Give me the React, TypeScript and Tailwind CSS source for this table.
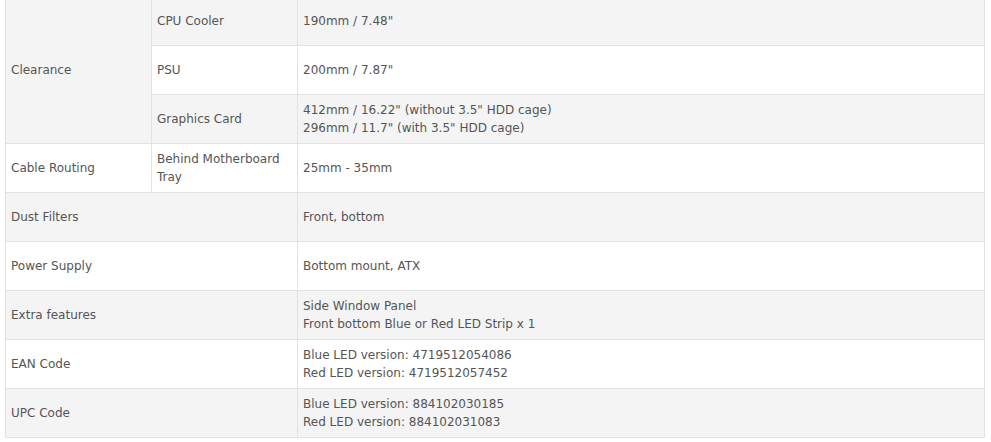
import React from "react";

type Row = {
  head?: string;
  headSpan?: number;
  sub?: string;
  value: string[];
  bg: string;
  full?: boolean;
};

const rows: Row[] = [
  { head: "Clearance", headSpan: 3, sub: "CPU Cooler", value: ["190mm / 7.48\""], bg: "bg-[#f4f4f4]" },
  { sub: "PSU", value: ["200mm / 7.87\""], bg: "bg-white" },
  {
    sub: "Graphics Card",
    value: ["412mm / 16.22\" (without 3.5\" HDD cage)", "296mm / 11.7\" (with 3.5\" HDD cage)"],
    bg: "bg-[#f4f4f4]",
  },
  { head: "Cable Routing", sub: "Behind Motherboard Tray", value: ["25mm - 35mm"], bg: "bg-white" },
  { head: "Dust Filters", full: true, value: ["Front, bottom"], bg: "bg-[#f4f4f4]" },
  { head: "Power Supply", full: true, value: ["Bottom mount, ATX"], bg: "bg-white" },
  {
    head: "Extra features",
    full: true,
    value: ["Side Window Panel", "Front bottom Blue or Red LED Strip x 1"],
    bg: "bg-[#f4f4f4]",
  },
  {
    head: "EAN Code",
    full: true,
    value: ["Blue LED version: 4719512054086", "Red LED version: 4719512057452"],
    bg: "bg-white",
  },
  {
    head: "UPC Code",
    full: true,
    value: ["Blue LED version: 884102030185", "Red LED version: 884102031083"],
    bg: "bg-[#f4f4f4]",
  },
];

const cell = "border border-[#e2e2e2] px-[5px] align-middle";

export default function App() {
  return (
    <div className="w-[991px] h-[442px] overflow-hidden bg-white">
      <div className="-mt-[4px] pl-[5px]">
        <table
          className="w-[980px] table-fixed border-collapse text-[12px] leading-[18px] text-[#555]"
          style={{ fontFamily: '"DejaVu Sans", Verdana, sans-serif' }}
        >
          <colgroup>
            <col className="w-[146px]" />
            <col className="w-[146px]" />
            <col />
          </colgroup>
          <tbody>
            {rows.map((r, i) => (
              <tr key={i} className={`h-[49px] ${r.bg}`}>
                {r.head && (
                  <td
                    className={`${cell} ${r.headSpan ? "bg-[#f4f4f4]" : ""}`}
                    rowSpan={r.headSpan}
                    colSpan={r.full ? 2 : 1}
                  >
                    {r.head}
                  </td>
                )}
                {r.sub && <td className={cell}>{r.sub}</td>}
                <td className={cell}>
                  {r.value.map((v) => (
                    <div key={v}>{v}</div>
                  ))}
                </td>
              </tr>
            ))}
          </tbody>
        </table>
      </div>
    </div>
  );
}
